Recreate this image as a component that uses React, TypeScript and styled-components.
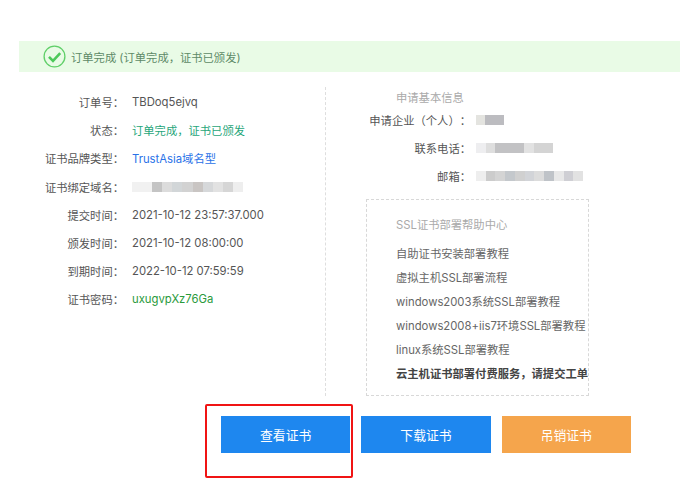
import styled, { createGlobalStyle } from 'styled-components';

const GlobalStyle = createGlobalStyle`
  html, body {
    margin: 0;
    padding: 0;
    background: #fff;
    font-family: Inter, "Noto Sans CJK SC", sans-serif;
    font-size: 11.3px;
    color: #555;
  }
`;

// 全角标点
const COLON = '\uFF1A';
const COMMA = '\uFF0C';
const LP = '\uFF08';
const RP = '\uFF09';

// 打码区域的色块
const domainBlur = ['#f1f1f1', '#f1f1f1', '#c4c4c4', '#dcdcdc', '#d2d6d8', '#d2d2d2', '#c9c5c3', '#d6d8da', '#e2e2e2', '#d6d6d6', '#eeeeee'];
const companyBlur = ['#e4e4e0', '#bcbcc0', '#bcbcc0'];
const phoneBlur = ['#eeeef0', '#dedede', '#c2c2c4', '#c2c2c4', '#c2c2c4', '#e2e2e2', '#d4d4d4', '#d4d4d4'];
const mailBlur = ['#eeeeee', '#cccccc', '#d4d4d4', '#c4c8cc', '#d0d0d0', '#d2d4d8', '#dcdcdc', '#bfc3c8', '#e8e8e8', '#cfcfd4', '#e2e2e2'];

const leftRows = [
  { label: '订单号', value: 'TBDoq5ejvq' },
  { label: '状态', value: `订单完成${COMMA}证书已颁发`, tone: '#1fa67a' },
  { label: '证书品牌类型', value: 'TrustAsia域名型', tone: '#2a72e8' },
  { label: '证书绑定域名', blur: domainBlur, blurWidth: 111 },
  { label: '提交时间', value: '2021-10-12 23:57:37.000' },
  { label: '颁发时间', value: '2021-10-12 08:00:00' },
  { label: '到期时间', value: '2022-10-12 07:59:59' },
  { label: '证书密码', value: 'uxugvpXz76Ga', tone: '#2a9a3c' },
];

const rightRows = [
  { label: `申请企业${LP}个人${RP}`, blur: companyBlur, blurWidth: 28 },
  { label: '联系电话', blur: phoneBlur, blurWidth: 77 },
  { label: '邮箱', blur: mailBlur, blurWidth: 107 },
];

const helpLinks = [
  '自助证书安装部署教程',
  '虚拟主机SSL部署流程',
  'windows2003系统SSL部署教程',
  'windows2008+iis7环境SSL部署教程',
  'linux系统SSL部署教程',
];

const Blur = ({ cells, width }: { cells: string[]; width: number }) => (
  <BlurStrip width={width}>
    {cells.map((c, i) => (
      <BlurCell key={i} color={c} />
    ))}
  </BlurStrip>
);

export default function App() {
  return (
    <Page>
      <GlobalStyle />
      <Banner>
        <svg width="23" height="23" viewBox="0 0 23 23" fill="none">
          <circle cx="11.5" cy="11.5" r="10.4" stroke="#5fcf68" strokeWidth="1.3" />
          <path d="M6 11.8l4 4 7.2-7.6" stroke="#4cc95a" strokeWidth="2.6" />
        </svg>
        <BannerText>{`订单完成 (订单完成${COMMA}证书已颁发)`}</BannerText>
      </Banner>

      <Columns>
        <LeftColumn>
          {leftRows.map(row => (
            <LeftRow key={row.label}>
              <RowLabel>{row.label + COLON}</RowLabel>
              {row.blur ? (
                <Blur cells={row.blur} width={row.blurWidth} />
              ) : (
                <RowValue color={row.tone}>{row.value}</RowValue>
              )}
            </LeftRow>
          ))}
        </LeftColumn>

        <RightColumn>
          <InfoTitle>申请基本信息</InfoTitle>
          {rightRows.map(row => (
            <RightRow key={row.label}>
              <RightLabel>{row.label + COLON}</RightLabel>
              <Blur cells={row.blur} width={row.blurWidth} />
            </RightRow>
          ))}
          <HelpBox>
            <HelpTitle>SSL证书部署帮助中心</HelpTitle>
            {helpLinks.map(link => (
              <HelpLink key={link}>{link}</HelpLink>
            ))}
            <HelpLink bold>{`云主机证书部署付费服务${COMMA}请提交工单`}</HelpLink>
          </HelpBox>
        </RightColumn>
      </Columns>

      <Actions>
        <Highlight />
        <ActionButton>查看证书</ActionButton>
        <ActionButton>下载证书</ActionButton>
        <ActionButton color="#f5a54c">吊销证书</ActionButton>
      </Actions>
    </Page>
  );
}

const Page = styled.div`
  width: 680px;
  height: 500px;
  overflow: hidden;
  box-sizing: border-box;
  padding-top: 41px;
  background: #fff;
`;

const Banner = styled.div`
  display: flex;
  align-items: center;
  gap: 5px;
  height: 31px;
  margin-left: 19px;
  padding-left: 24px;
  background: #e9fbe6;
`;

const BannerText = styled.span`
  color: #5d8a66;
`;

const Columns = styled.div`
  display: flex;
  height: 309px;
  margin-top: 15px;
`;

const LeftColumn = styled.div`
  display: flex;
  flex-direction: column;
  width: 326px;
  box-sizing: border-box;
  padding-top: 1px;
  border-right: 1px dashed #dedede;
`;

const LeftRow = styled.div`
  display: flex;
  align-items: center;
  gap: 8px;
  height: 28.2px;
`;

const RowLabel = styled.span`
  width: 124px;
  text-align: right;
  color: #555;
`;

const RowValue = styled.span<{ color?: string }>`
  color: ${props => props.color || '#555'};
`;

const BlurStrip = styled.div<{ width: number }>`
  display: flex;
  width: ${props => props.width}px;
  height: 10px;
  filter: blur(0.6px);
`;

const BlurCell = styled.div<{ color: string }>`
  flex: 1;
  background: ${props => props.color};
`;

const RightColumn = styled.div`
  display: flex;
  flex-direction: column;
  width: 354px;
  padding-top: 2px;
`;

const InfoTitle = styled.div`
  margin-left: 70px;
  margin-bottom: -1px;
  line-height: 18px;
  color: #aaa;
`;

const RightRow = styled.div`
  display: flex;
  align-items: center;
  gap: 5px;
  height: 28px;
`;

const RightLabel = styled.span`
  width: 145px;
  text-align: right;
  white-space: nowrap;
  text-spacing-trim: space-all;
  color: #555;
`;

const HelpBox = styled.div`
  width: 223px;
  height: 197px;
  box-sizing: border-box;
  margin: 9px 0 0 40px;
  padding: 15px 0 0 29px;
  border: 1px dashed #d8d8d8;
  white-space: nowrap;
`;

const HelpTitle = styled.div`
  line-height: 20px;
  margin-bottom: 7px;
  color: #aaa;
`;

const HelpLink = styled.div<{ bold?: boolean }>`
  height: 24px;
  line-height: 24px;
  color: ${props => (props.bold ? '#444' : '#666')};
  font-weight: ${props => (props.bold ? 700 : 400)};
`;

const Actions = styled.div`
  position: relative;
  display: flex;
  gap: 11px;
  margin-top: 20px;
  padding-left: 221px;
`;

const ActionButton = styled.button<{ color?: string }>`
  width: 129.3px;
  height: 37px;
  padding: 0;
  border: 0;
  background: ${props => props.color || '#1e87ef'};
  color: #fff;
  font: inherit;
  font-size: 12.8px;
`;

// 截图上手工画的红框
const Highlight = styled.div`
  position: absolute;
  left: 205px;
  top: -12px;
  width: 144px;
  height: 70px;
  border: 2px solid #f01414;
  border-radius: 2px;
`;
